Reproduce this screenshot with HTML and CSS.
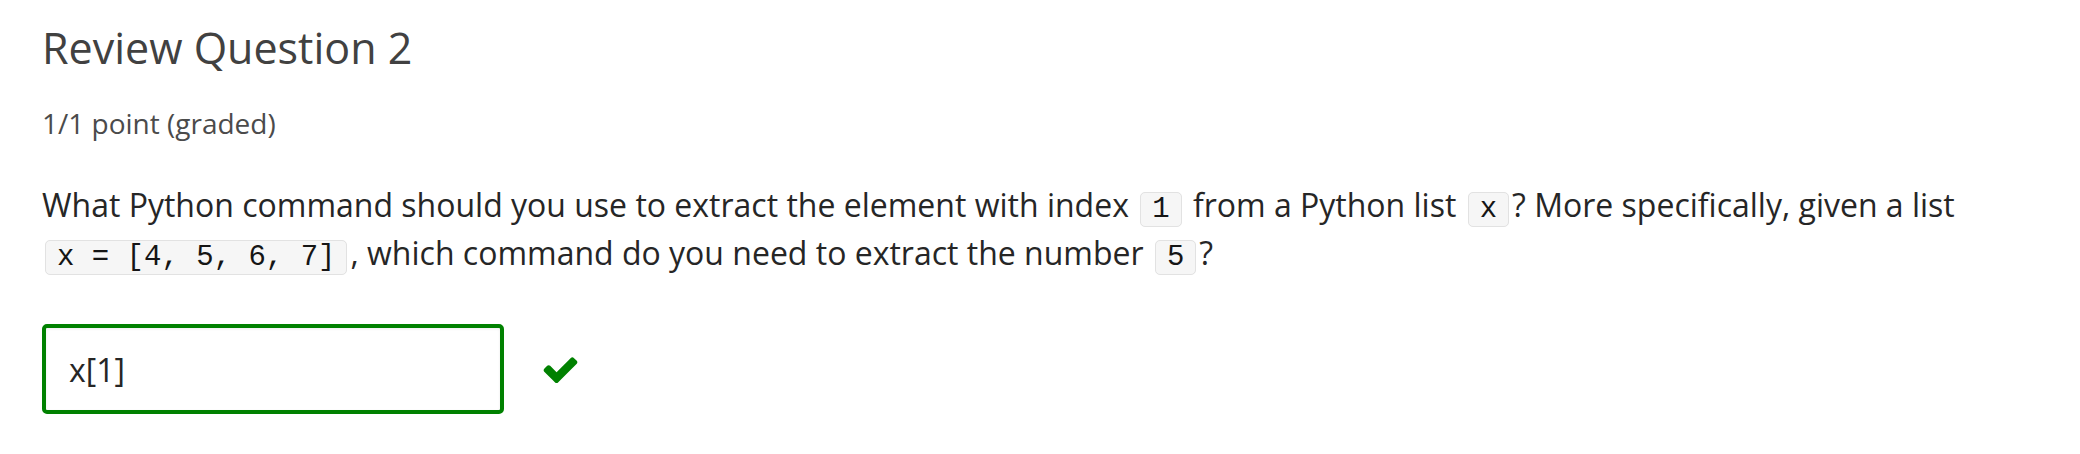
FILE: index.html
```html
<!DOCTYPE html>
<html lang="en">
<head>
<meta charset="utf-8">
<title>Review Question 2</title>
<link rel="stylesheet" href="styles.css">
</head>
<body>
<div class="problem">
  <h3 class="problem-title">Review Question 2</h3>
  <div class="problem-progress">1/1 point (graded)</div>
  <p class="problem-text">What Python command should you use to extract the element with index <code>1</code> from a Python list <code>x</code>? More specifically, given a list <code>x = [4, 5, 6, 7]</code>, which command do you need to extract the number <code>5</code>?</p>
  <div class="answer-row">
    <div class="answer-input">x[1]</div>
    <svg class="status-icon" viewBox="0 0 1792 1792" aria-label="correct"><path d="M1671 566q0 40-28 68l-724 724-136 136q-28 28-68 28t-68-28l-136-136-362-362q-28-28-28-68t28-68l136-136q28-28 68-28t68 28l294 295 656-657q28-28 68-28t68 28l136 136q28 28 28 68z"/></svg>
  </div>
</div>
</body>
</html>
```

FILE: styles.css
```css
html, body {
  margin: 0;
  padding: 0;
  background: #ffffff;
}

body {
  font-family: "Open Sans", "Liberation Sans", sans-serif;
  color: #313131;
}

.problem {
  padding: 23px 42px 0 42px;
}

.problem-title {
  margin: 0;
  font-size: 43px;
  line-height: 50px;
  font-weight: 400;
  color: #414141;
}

.problem-progress {
  margin-top: 31px;
  font-size: 28px;
  line-height: 38px;
  color: #4b4b4b;
}

.problem-text {
  margin: 39px 0 0 0;
  font-size: 32px;
  line-height: 48px;
  color: #262626;
}

.problem-text code {
  font-family: "Liberation Mono", "DejaVu Sans Mono", monospace;
  font-size: 29px;
  line-height: 30px;
  white-space: nowrap;
  color: #151515;
  background: #f6f6f6;
  border: 1px solid #e2e2e2;
  border-radius: 5px;
  padding: 0 11px;
  margin: 0 3px;
}

.answer-row {
  margin-top: 47px;
  display: flex;
  align-items: center;
  gap: 37px;
}

.answer-input {
  box-sizing: border-box;
  width: 462px;
  height: 90px;
  border: 4px solid #008100;
  border-radius: 5px;
  box-shadow: inset 0 1px 3px rgba(0, 0, 0, 0.08);
  display: flex;
  align-items: center;
  padding-left: 23px;
  font-size: 32px;
  color: #262626;
}

.status-icon {
  width: 39px;
  height: 39px;
  fill: #008100;
}
```
